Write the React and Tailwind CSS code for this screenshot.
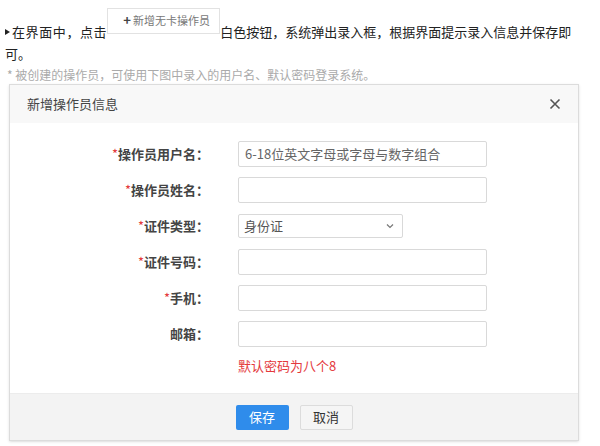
const font = { fontFamily: '"Noto Sans CJK SC", "Noto Sans", sans-serif' };

const Field = ({ label, required, children }) => (
    <div className="flex items-center h-[26px]">
        <div className="w-[199px] text-right text-[13px] font-bold text-[#444]">
            {required && <span className="text-[#e4393c] font-normal">*</span>}
            {label}：
        </div>
        <div className="ml-[29px]">{children}</div>
    </div>
);

const Input = ({ placeholder }) => (
    <div className="w-[249px] h-[26px] border border-[#d9d9d9] rounded-[2px] bg-white px-[6px] flex items-center text-[13px] text-[#666]">
        {placeholder}
    </div>
);

export default function App() {
    return (
        <div className="w-[600px] h-[446px] bg-white overflow-hidden text-[#222]" style={font}>
            {/* intro text */}
            <div className="pt-2 pl-[5px]">
                <div className="flex items-start whitespace-nowrap text-[13px]">
                    <span className="mt-[14px] leading-[20px] flex items-center tracking-[0.6px]">
                        <span className="inline-block w-0 h-0 border-y-[3px] border-y-transparent border-l-[5px] border-l-[#222] mr-[2px]"></span>
                        在界面中，点击
                    </span>
                    <span className="w-[113px] h-[26px] border border-[#e2e2e2] bg-white flex items-start justify-center pt-[3px] pl-[6px] text-[11px] text-[#777] leading-[16px]">
                        <span className="font-bold text-[#444] mr-[2px] text-[13px] leading-[15px]">+</span>
                        新增无卡操作员
                    </span>
                    <span className="mt-[14px] leading-[20px]">
                        白色按钮，系统弹出录入框，根据界面提示录入信息并保存即
                    </span>
                </div>
                <div className="text-[13px] leading-[20px] mt-[2px]">可。</div>
                <div className="text-[12px] leading-[20px] text-[#aaa] mt-px pl-[2px]">
                    * 被创建的操作员，可使用下图中录入的用户名、默认密码登录系统。
                </div>
            </div>

            {/* dialog */}
            <div className="ml-[9px] -mt-px w-[570px] border border-[#dcdcdc] shadow-sm">
                <div className="h-[38px] bg-[#f8f8f8] flex items-center justify-between pl-[17px] pr-[16px]">
                    <span className="text-[13px] text-[#444]">新增操作员信息</span>
                    <svg width="12" height="12" viewBox="0 0 12 12" className="mr-[1px]">
                        <path d="M1.5 1.5 L10.5 10.5 M10.5 1.5 L1.5 10.5" stroke="#555" strokeWidth="1.6" />
                    </svg>
                </div>
                <div className="bg-white pt-[18px] pb-[17px] flex flex-col gap-[10px]">
                    <Field label="操作员用户名" required>
                        <Input placeholder="6-18位英文字母或字母与数字组合" />
                    </Field>
                    <Field label="操作员姓名" required>
                        <Input />
                    </Field>
                    <Field label="证件类型" required>
                        <div className="w-[165px] h-[24px] border border-[#d9d9d9] rounded-[2px] bg-white pl-[5px] pr-[8px] flex items-center justify-between text-[13px] text-[#555]">
                            身份证
                            <svg width="8" height="6" viewBox="0 0 8 6">
                                <path d="M1 1.5 L4 4.5 L7 1.5" stroke="#777" strokeWidth="1.2" fill="none" />
                            </svg>
                        </div>
                    </Field>
                    <Field label="证件号码" required>
                        <Input />
                    </Field>
                    <Field label="手机" required>
                        <Input />
                    </Field>
                    <Field label="邮箱">
                        <Input />
                    </Field>
                    <div className="pl-[228px] text-[13px] leading-[20px] text-[#e4393c] -mt-[1px]">
                        默认密码为八个8
                    </div>
                </div>
                <div className="h-[47px] bg-[#f3f3f3] border-t border-[#ececec] flex items-center justify-center gap-[11px]">
                    <button className="w-[53px] h-[25px] bg-[#2f8ceb] rounded-[2px] text-white text-[13px]">保存</button>
                    <button className="w-[53px] h-[25px] bg-[#f5f5f5] border border-[#dcdcdc] rounded-[2px] text-[#333] text-[13px]">取消</button>
                </div>
            </div>
        </div>
    );
}
